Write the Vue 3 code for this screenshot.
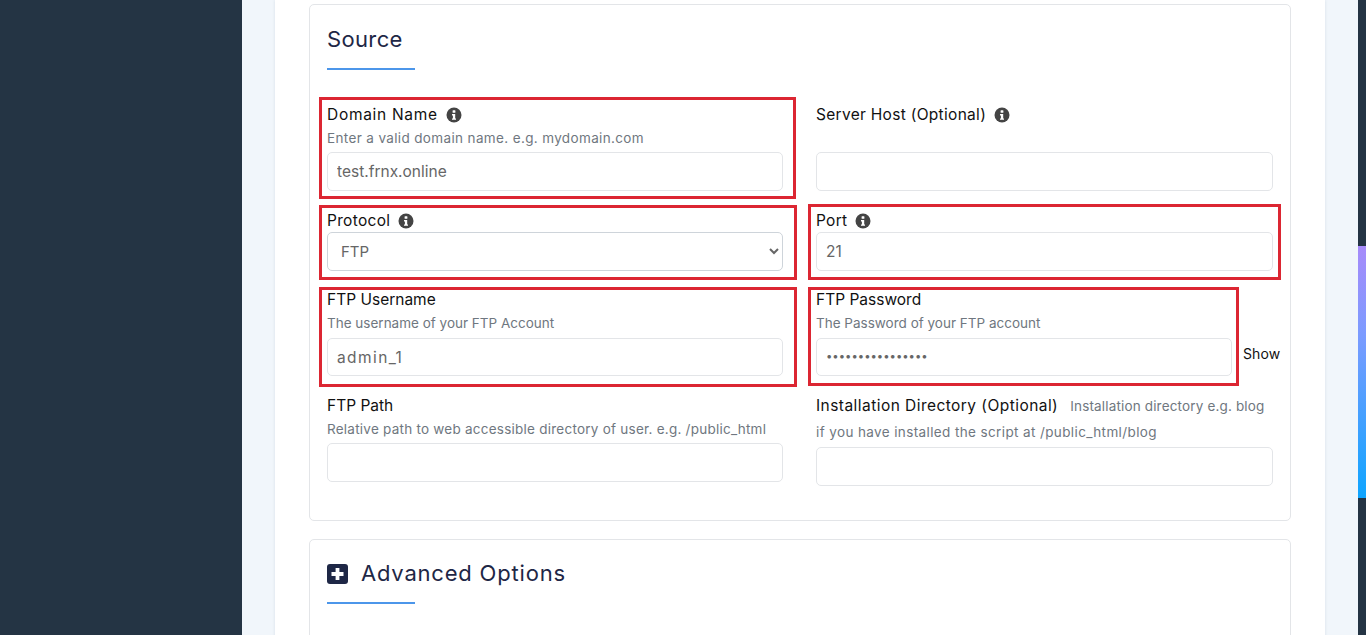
<script setup>
const infoPath = 'M8 0.5a7.5 7.5 0 1 0 0 15a7.5 7.5 0 0 0 0-15z'
</script>

<template>
  <div class="shell">
    <aside class="sidebar"></aside>
    <main class="main">
      <div class="card">
        <section class="panel source">
          <h2 class="title">Source</h2>
          <div class="rule"></div>
          <div class="form">
            <div class="field">
              <span class="mark m-domain"></span>
              <label class="label wide">Domain Name
                <svg class="info" viewBox="0 0 16 16"><path :d="infoPath" fill="#444" /><rect x="6.6" y="3.2" width="2.8" height="2.6" rx=".6" fill="#fff" /><path d="M6 7h3.2v4.4H10v1.4H6v-1.4h.9V8.4H6z" fill="#fff" /></svg>
              </label>
              <p class="hint enter">Enter a valid domain name. e.g. mydomain.com</p>
              <input class="control" type="text" value="test.frnx.online" />
            </div>
            <div class="field">
              <label class="label">Server Host (Optional)
                <svg class="info" viewBox="0 0 16 16"><path :d="infoPath" fill="#444" /><rect x="6.6" y="3.2" width="2.8" height="2.6" rx=".6" fill="#fff" /><path d="M6 7h3.2v4.4H10v1.4H6v-1.4h.9V8.4H6z" fill="#fff" /></svg>
              </label>
              <p class="hint"></p>
              <input class="control" type="text" />
            </div>

            <div class="field short">
              <span class="mark m-protocol"></span>
              <label class="label">Protocol
                <svg class="info" viewBox="0 0 16 16"><path :d="infoPath" fill="#444" /><rect x="6.6" y="3.2" width="2.8" height="2.6" rx=".6" fill="#fff" /><path d="M6 7h3.2v4.4H10v1.4H6v-1.4h.9V8.4H6z" fill="#fff" /></svg>
              </label>
              <select class="control select"><option>FTP</option></select>
            </div>
            <div class="field short">
              <span class="mark m-port"></span>
              <label class="label">Port
                <svg class="info" viewBox="0 0 16 16"><path :d="infoPath" fill="#444" /><rect x="6.6" y="3.2" width="2.8" height="2.6" rx=".6" fill="#fff" /><path d="M6 7h3.2v4.4H10v1.4H6v-1.4h.9V8.4H6z" fill="#fff" /></svg>
              </label>
              <input class="control" type="text" value="21" />
            </div>

            <div class="field low">
              <span class="mark m-user"></span>
              <label class="label tight">FTP Username</label>
              <p class="hint tight">The username of your FTP Account</p>
              <input class="control thin spaced" type="text" value="admin_1" />
            </div>
            <div class="field low">
              <span class="mark m-pass"></span>
              <label class="label tight">FTP Password</label>
              <p class="hint tight">The Password of your FTP account</p>
              <div class="pass-row">
                <input class="control thin pass" type="password" value="passwordpassword" />
                <span class="show">Show</span>
              </div>
            </div>

            <div class="field last">
              <label class="label tight">FTP Path</label>
              <p class="hint relative">Relative path to web accessible directory of user. e.g. /public_html</p>
              <input class="control" type="text" />
            </div>
            <div class="field last">
              <label class="label install">Installation Directory (Optional)<span class="hint inline">Installation directory e.g. blog</span></label>
              <p class="hint second">if you have installed the script at /public_html/blog</p>
              <input class="control" type="text" />
            </div>
          </div>
        </section>

        <section class="panel advanced">
          <h2 class="title adv">
            <svg class="plus" viewBox="0 0 21 20"><rect width="21" height="20" rx="3" fill="#1e2746" /><path d="M8.6 4h3.8v4.1h4.1v3.8h-4.1V16H8.6v-4.1H4.5V8.1h4.1z" fill="#fff" /></svg>
            Advanced Options
          </h2>
          <div class="rule adv-rule"></div>
        </section>
      </div>
    </main>
    <div class="scrollbar"><div class="thumb"></div></div>
  </div>
</template>

<style scoped>
.shell {
  display: flex;
  height: 635px;
  overflow: hidden;
  font-family: Inter, "Liberation Sans", sans-serif;
}
.sidebar {
  width: 242px;
  flex: none;
  background: #243444;
}
.main {
  flex: 1;
  background: #f1f6fb;
  padding: 0 33px;
  min-width: 0;
}
.card {
  background: #fff;
  padding: 4px 34px 0;
  height: 100%;
  box-shadow: 0 0 3px rgba(40, 60, 90, .12);
}
.panel {
  border: 1px solid #e3e5e8;
  border-radius: 5px;
  padding: 17px 17px 0;
}
.source {
  height: 517px;
  box-sizing: border-box;
}
.advanced {
  margin-top: 18px;
  padding-top: 15px;
  height: 200px;
  box-sizing: border-box;
}
.title {
  margin: 0;
  height: 37px;
  line-height: 34px;
  font-size: 22px;
  font-weight: 400;
  color: #1e2746;
  letter-spacing: .35px;
}
.adv {
  display: flex;
  align-items: center;
  gap: 13px;
  line-height: 37px;
  letter-spacing: .8px;
}
.plus {
  width: 21px;
  height: 20px;
  flex: none;
}
.rule {
  width: 88px;
  height: 2px;
  margin-top: 9px;
  background: #4c96ea;
}
.adv-rule {
  margin-top: 10px;
}
.form {
  display: grid;
  grid-template-columns: 456px 457px;
  column-gap: 33px;
  row-gap: 19px;
  align-items: start;
  margin-top: 35px;
}
.field {
  position: relative;
  display: flex;
  flex-direction: column;
}
.label {
  height: 20px;
  line-height: 20px;
  font-size: 15.5px;
  letter-spacing: .3px;
  color: #111;
  display: flex;
  align-items: center;
  white-space: nowrap;
}
.label.wide {
  letter-spacing: .7px;
}
.label.tight {
  letter-spacing: 0;
}
.label.install {
  letter-spacing: .45px;
}
.short .label,
.last .label {
  margin-top: 1px;
}
.short .control {
  margin-top: 1px;
}
.info {
  width: 16px;
  height: 16px;
  margin-left: 8px;
  flex: none;
}
.hint {
  margin: 4px 0;
  height: 19px;
  line-height: 19px;
  font-size: 13.5px;
  letter-spacing: .3px;
  color: #6f7780;
  white-space: nowrap;
}
.hint.enter {
  letter-spacing: .36px;
}
.hint.relative {
  letter-spacing: .24px;
}
.hint.tight {
  letter-spacing: 0;
}
.low .hint {
  margin-bottom: 5px;
}
.hint.inline {
  margin: 0 0 0 12px;
  letter-spacing: .16px;
}
.hint.second {
  margin: 7px 0 5px;
  letter-spacing: .38px;
}
.control {
  box-sizing: border-box;
  width: 100%;
  height: 39px;
  border: 1px solid #e3e5e8;
  border-radius: 5px;
  background: #fff;
  padding: 0 9px;
  font: inherit;
  font-size: 15.5px;
  color: #666;
  outline: none;
}
.thin {
  height: 38px;
}
.spaced {
  letter-spacing: 1.4px;
}
.select {
  border-color: #ced4da;
  font-size: 15px;
}
.pass-row {
  display: flex;
  align-items: center;
  gap: 11px;
  width: 465px;
}
.pass {
  width: 416px;
  flex: none;
  font-size: 11.3px;
  padding-bottom: 2px;
}
.show {
  font-size: 14px;
  letter-spacing: .1px;
  color: #111;
  position: relative;
  top: -4px;
}
.mark {
  position: absolute;
  border: 3px solid #dc2632;
  pointer-events: none;
  box-sizing: border-box;
}
.m-domain { left: -8px; top: -8px; width: 477px; height: 102px; }
.m-protocol { left: -8px; top: -5px; width: 478px; height: 75px; }
.m-port { left: -8px; top: -6px; width: 473px; height: 76px; }
.m-user { left: -8px; top: -3px; width: 478px; height: 100px; }
.m-pass { left: -8px; top: -3px; width: 431px; height: 99px; }
.scrollbar {
  width: 8px;
  flex: none;
  background: #243444;
  padding-top: 246px;
}
.thumb {
  height: 252px;
  background: linear-gradient(180deg, #a78bfa 0%, #7c9bff 35%, #0ea5ff 100%);
}
</style>

<style>
html, body { margin: 0; overflow: hidden; }
</style>
